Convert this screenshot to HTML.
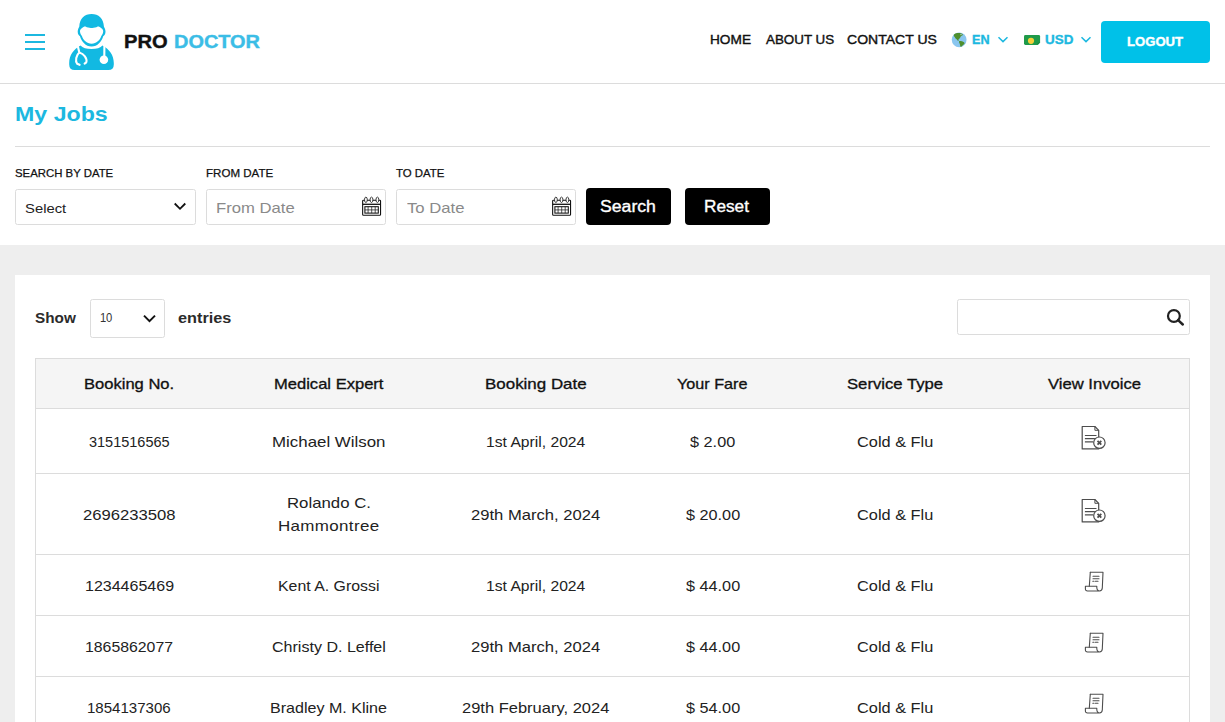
<!DOCTYPE html>
<html lang="en"><head><meta charset="utf-8"><title>Pro Doctor - My Jobs</title>
<style>
*{box-sizing:border-box;margin:0;padding:0}
html,body{width:1225px;height:722px;overflow:hidden;background:#fff;font-family:"Liberation Sans",sans-serif;}
body{position:relative}
.t{position:absolute;transform-origin:0 50%;white-space:pre;line-height:20px;font-family:"Liberation Sans",sans-serif;}
.abs{position:absolute}
.hdr{position:absolute;left:0;top:0;width:1225px;height:84px;background:#fff;border-bottom:1px solid #dcdcdc}
.bar{position:absolute;left:25px;width:20px;height:2px;background:#1cb8e0}
.hr{position:absolute;left:15px;top:146px;width:1195px;height:1px;background:#dcdcdc}
.inp{position:absolute;top:189px;height:36px;width:181px;border:1px solid #dcdcdc;border-radius:2.5px;background:#fff}
.btn{position:absolute;top:188px;height:37px;width:85px;background:#000;border-radius:4px}
.gray{position:absolute;left:0;top:245px;width:1225px;height:477px;background:#eeeeee}
.card{position:absolute;left:15px;top:275px;width:1195px;height:447px;background:#fff}
.logout{position:absolute;left:1101px;top:21px;width:109px;height:42px;background:#00c1e8;border-radius:4px}
.tbl{position:absolute;left:35px;top:358px;width:1155px;height:364px;border:1px solid #dcdcdc;border-bottom:none}
.thead{position:absolute;left:0;top:0;width:1153px;height:50px;background:#f5f5f5}
.line{position:absolute;left:0;width:1153px;height:1px;background:#dcdcdc}

</style></head>
<body>
<div class="hdr"></div>
<div class="bar" style="top:34px"></div><div class="bar" style="top:41px"></div><div class="bar" style="top:48px"></div>

<!-- doctor logo -->
<svg class="abs" style="left:69px;top:14px" width="45" height="57" viewBox="0 0 45 57">
  <path fill="#12b9e2" d="M5.700 56 Q0.2 56 0.2 50.500 V49 C0.2 41 4.5 35.400 11.5 31.4 C13.500 33.8 17.5 34.900 22.5 34.9 C27.5 34.900 31.500 33.8 33.5 31.400 C40.5 35.4 44.800 41 44.8 49 V50.500 Q44.8 56 39.300 56 Z"/>
  <path fill="#12b9e2" d="M22.6 0 C29.600 0 34.6 4.600 34.9 12.5 C35 13.500 36.5 14.5 36.500 17.6 C36.5 20 35.500 21.5 34.2 22.300 C32.8 27.5 28.500 32.56 22.6 32.560 C16.7 32.56 12.400 27.5 11 22.300 C9.7 21.5 8.700 20 8.7 17.600 C8.7 14.5 10.200 13.5 10.3 12.500 C10.6 4.6 15.600 0 22.6 0 Z"/>
  <path fill="#fff" d="M12.9 14.300 C14 13 15.300 12.5 16.5 12.600 C18.5 13.8 20.500 14.1 22.6 14 C24.700 14.1 26.7 13.800 28.7 12.6 C29.900 12.5 31.2 13 32.300 14.3 C33.6 15 34.300 16.2 34.2 17.600 C34.1 19.5 33.300 20.6 32.3 22 C31 26 27.500 29.7 22.6 29.700 C17.7 29.7 14.200 26 12.9 22 C11.900 20.6 11.1 19.500 11 17.6 C10.900 16.2 11.6 15 12.900 14.3 Z"/>
  <g fill="none" stroke="#fff" stroke-width="2.100" stroke-linecap="round" stroke-linejoin="round">
    <path d="M8.9 32.600 L10.3 38.500 C7.3 41 5.900 47 8.2 49.800 L10.6 50.800"/>
    <path d="M10.8 38.700 C14.5 39.500 18.500 44.5 17.3 48.300 L15.6 49.600"/>
    <path d="M35.4 32.300 L35.300 42"/>
  </g>
  <circle cx="34.900" cy="45.700" r="4.300" fill="#fff"/>
</svg>

<!-- globe emoji -->
<svg class="abs" style="left:951px;top:32px" width="16" height="16" viewBox="-0.7 -0.4 16 16">
  <circle cx="7.45" cy="7.45" r="7.4" fill="#8ac6ef"/>
  <path fill="#4f8f2e" d="M2.3 2.100 C4 0.700 6.800 0.300 9 0.900 C10.2 1.3 11.100 1.800 11.2 2.3 C10.600 3.400 9.4 3.5 8.8 4.400 C8.700 5.5 7.8 6.300 7 6.8 C6.600 7.700 6.7 8.300 7.1 8.6 C6.200 8.500 5.5 7.8 5.2 7 C4.300 6.500 3.4 5.600 3 4.600 C2.300 4.200 1.8 3.100 2.300 2.1 Z"/>
  <path fill="#4f8f2e" d="M7.6 8.700 C8.8 8.300 10.6 8.700 11.900 9.500 C12.9 10 13.100 10.8 12.5 11.600 C11.7 12.300 10.600 13.2 9.8 14.200 C9.300 14.600 8.7 14.4 8.600 13.800 C8.5 12.6 8 11.600 7.700 10.600 C7.2 10 7.100 9.2 7.6 8.700 Z"/>
  <circle cx="9.300" cy="2.2" r="0.600" fill="#d8ecf8"/>
</svg>
<!-- chevron EN -->
<svg class="abs" style="left:997px;top:36px" width="12" height="8" viewBox="-0.5 -0.5 12 8"><path d="M1 0.800 L5.500 5.100 L10 0.800" fill="none" stroke="#1cb8e0" stroke-width="1.500"/></svg>
<!-- money emoji -->
<svg class="abs" style="left:1023px;top:34px" width="18" height="12" viewBox="-0.8 -0.9 18 12">
  <path fill="#1f9a49" d="M1.6 0.200 H14.9 Q16.300 0.2 16.3 1.600 V7.500 L13.800 10 H1.6 Q0.200 10 0.2 8.600 V1.6 Q0.2 0.200 1.6 0.2 Z"/>
  <path fill="#178a3f" d="M16.3 7.500 L13.8 10 L13.800 8.300 Q13.8 7.500 14.600 7.5 Z"/>
  <circle cx="7.200" cy="5.9" r="3.100" fill="#f6cf3a"/>
</svg>
<!-- chevron USD -->
<svg class="abs" style="left:1080px;top:36px" width="12" height="8" viewBox="-0.5 -0.5 12 8"><path d="M1 0.800 L5.500 5.100 L10 0.800" fill="none" stroke="#1cb8e0" stroke-width="1.500"/></svg>
<div class="logout"></div>

<div class="hr"></div>

<!-- filter row -->
<div class="inp" style="left:15px"></div>
<svg class="abs" style="left:173px;top:202px" width="14" height="10" viewBox="-0.5 -0 14 10"><path d="M1.2 1.5 L6.5 6.8 L11.800 1.5" fill="none" stroke="#111" stroke-width="1.800"/></svg>
<div class="inp" style="left:206px;width:180px"></div>
<div class="inp" style="left:396px;width:180px"></div>
<svg class="abs cal" style="left:362px;top:196px" width="21" height="21" viewBox="-0 -0.5 21 21">
  <g fill="none" stroke="#111">
    <rect x="0.65" y="3.8" width="17.9" height="15" rx="0.8" stroke-width="1.100"/>
    <line x1="0.65" y1="7.8" x2="18.55" y2="7.800" stroke-width="1.3"/>
    <rect x="2.9" y="10.2" width="13.4" height="6.4" stroke-width="1.050"/>
    <path d="M6.1 10.2 V16.600 M9.7 10.200 V16.6 M13.200 10.2 V16.6 M2.9 13.400 H16.3" stroke-width="0.7"/>
  </g>
  <g fill="#fff" stroke="#111" stroke-width="0.800"><ellipse cx="3.9" cy="3.3" rx="1.4" ry="2.7"/><ellipse cx="9.5" cy="3.300" rx="1.4" ry="2.7"/><ellipse cx="15.4" cy="3.3" rx="1.400" ry="2.7"/></g>
</svg>
<svg class="abs cal" style="left:552px;top:196px" width="21" height="21" viewBox="-0 -0.5 21 21">
  <g fill="none" stroke="#111">
    <rect x="0.65" y="3.8" width="17.9" height="15" rx="0.8" stroke-width="1.100"/>
    <line x1="0.65" y1="7.8" x2="18.55" y2="7.800" stroke-width="1.3"/>
    <rect x="2.9" y="10.2" width="13.4" height="6.4" stroke-width="1.050"/>
    <path d="M6.1 10.2 V16.600 M9.7 10.200 V16.6 M13.200 10.2 V16.6 M2.9 13.400 H16.3" stroke-width="0.7"/>
  </g>
  <g fill="#fff" stroke="#111" stroke-width="0.800"><ellipse cx="3.9" cy="3.3" rx="1.4" ry="2.7"/><ellipse cx="9.5" cy="3.300" rx="1.4" ry="2.7"/><ellipse cx="15.4" cy="3.3" rx="1.400" ry="2.7"/></g>
</svg>
<div class="btn" style="left:586px"></div>
<div class="btn" style="left:685px"></div>

<!-- gray area + card -->
<div class="gray"></div>
<div class="card"></div>
<div class="abs" style="left:90px;top:299px;width:75px;height:39px;border:1px solid #dcdcdc;border-radius:2.5px;background:#fff"></div>
<svg class="abs" style="left:142px;top:313px" width="15" height="11" viewBox="-0.5 -0.6 15 11"><path d="M1.5 2 L7 7.5 L12.5 2" fill="none" stroke="#111" stroke-width="2"/></svg>
<div class="abs" style="left:957px;top:299px;width:233px;height:36px;border:1px solid #dcdcdc;border-radius:2.5px;background:#fff"></div>
<svg class="abs" style="left:1166px;top:308px" width="20" height="19" viewBox="-0 -0.5 20 19"><circle cx="7.900" cy="7.5" r="5.9" fill="none" stroke="#222" stroke-width="2.200"/><path d="M12.1 11.7 L16.800 16" stroke="#222" stroke-width="2.500" stroke-linecap="round"/></svg>

<!-- table -->
<div class="tbl">
  <div class="thead"></div>
  <div class="line" style="top:49px"></div>
  <div class="line" style="top:114px"></div>
  <div class="line" style="top:195px"></div>
  <div class="line" style="top:256px"></div>
  <div class="line" style="top:317px"></div>
</div>

<!-- invoice icons: doc with x -->
<svg class="abs" style="left:1081px;top:425px" width="27" height="26" viewBox="-0.5 -0.5 27 26">
  <g fill="none" stroke="#4d4d4d" stroke-width="1.200" stroke-linejoin="round">
    <path d="M0.7 1 H13.400 L17.200 4.800 V23.4 H0.7 Z"/>
    <path d="M13.400 1 V4.800 H17.2" stroke-width="1"/>
    <path d="M3.4 10 H15 M3.4 13.200 H13.4 M3.4 16.300 H12"/>
  </g>
  <circle cx="17.900" cy="17.2" r="5.700" fill="#fff" stroke="#4d4d4d" stroke-width="1.2"/>
  <path d="M16 15.300 L19.8 19.1 M19.800 15.3 L16 19.100" stroke="#4d4d4d" stroke-width="1.800"/>
</svg>
<svg class="abs" style="left:1081px;top:498px" width="27" height="26" viewBox="-0.5 -0.5 27 26">
  <g fill="none" stroke="#4d4d4d" stroke-width="1.200" stroke-linejoin="round">
    <path d="M0.7 1 H13.400 L17.200 4.800 V23.4 H0.7 Z"/>
    <path d="M13.400 1 V4.800 H17.2" stroke-width="1"/>
    <path d="M3.4 10 H15 M3.4 13.200 H13.4 M3.4 16.300 H12"/>
  </g>
  <circle cx="17.900" cy="17.2" r="5.700" fill="#fff" stroke="#4d4d4d" stroke-width="1.2"/>
  <path d="M16 15.300 L19.8 19.1 M19.800 15.3 L16 19.100" stroke="#4d4d4d" stroke-width="1.800"/>
</svg>
<!-- invoice icons: scroll -->
<svg class="abs sc" style="left:1084px;top:571px" width="22" height="22" viewBox="-0 -0.5 22 22">
  <g fill="none" stroke="#4d4d4d" stroke-width="1.1" stroke-linejoin="round" stroke-linecap="round">
    <path d="M6.300 0.8 H19 L18.300 16.600 C18.2 18.5 17 19.500 15.4 19.5 H3.500 C2.200 19.5 1.400 18.700 1.4 17.400 V14.700 H12.800 C12.600 17.300 13.300 19.5 15.400 19.5"/>
    <path d="M6.300 0.800 L5.300 14.700"/>
    <path d="M9 4.800 H15 M9 7.2 H15 M8.8 9.800 H10 M11.4 9.8 H14"/>
  </g>
</svg>
<svg class="abs sc" style="left:1084px;top:632px" width="22" height="22" viewBox="-0 -0.5 22 22">
  <g fill="none" stroke="#4d4d4d" stroke-width="1.1" stroke-linejoin="round" stroke-linecap="round">
    <path d="M6.300 0.8 H19 L18.300 16.600 C18.2 18.5 17 19.500 15.4 19.5 H3.500 C2.200 19.5 1.400 18.700 1.4 17.400 V14.700 H12.800 C12.600 17.300 13.300 19.5 15.400 19.5"/>
    <path d="M6.300 0.800 L5.300 14.700"/>
    <path d="M9 4.800 H15 M9 7.2 H15 M8.8 9.800 H10 M11.4 9.8 H14"/>
  </g>
</svg>
<svg class="abs sc" style="left:1084px;top:693px" width="22" height="22" viewBox="-0 -0.5 22 22">
  <g fill="none" stroke="#4d4d4d" stroke-width="1.1" stroke-linejoin="round" stroke-linecap="round">
    <path d="M6.300 0.8 H19 L18.300 16.600 C18.2 18.5 17 19.500 15.4 19.5 H3.500 C2.200 19.5 1.400 18.700 1.4 17.400 V14.700 H12.800 C12.600 17.300 13.300 19.5 15.400 19.5"/>
    <path d="M6.300 0.800 L5.300 14.700"/>
    <path d="M9 4.800 H15 M9 7.2 H15 M8.8 9.800 H10 M11.4 9.8 H14"/>
  </g>
</svg>

<!-- text layer -->
<span class="t" style="left:124.18px;top:31.59px;font-size:18.5px;color:#111;transform:scaleX(1.0881);font-weight:700;-webkit-text-stroke:0.4px #111;">PRO</span>
<span class="t" style="left:173.98px;top:31.59px;font-size:18.5px;color:#3bbde6;transform:scaleX(1.0769);font-weight:700;-webkit-text-stroke:0.4px #3bbde6;">DOCTOR</span>
<span class="t" style="left:710.39px;top:30.49px;font-size:13.6px;color:#111;transform:scaleX(1.0052);-webkit-text-stroke:0.4px #111;">HOME</span>
<span class="t" style="left:765.62px;top:30.49px;font-size:13.6px;color:#111;transform:scaleX(0.9853);-webkit-text-stroke:0.4px #111;">ABOUT US</span>
<span class="t" style="left:847.46px;top:30.49px;font-size:13.6px;color:#111;transform:scaleX(1.0317);-webkit-text-stroke:0.4px #111;">CONTACT US</span>
<span class="t" style="left:972.06px;top:30.09px;font-size:13.3px;color:#1cb8e0;transform:scaleX(0.9508);font-weight:700;-webkit-text-stroke:0.35px #1cb8e0;">EN</span>
<span class="t" style="left:1044.61px;top:30.09px;font-size:13.3px;color:#1cb8e0;transform:scaleX(1.0088);font-weight:700;-webkit-text-stroke:0.35px #1cb8e0;">USD</span>
<span class="t" style="left:1126.65px;top:32.19px;font-size:13.6px;color:#fff;transform:scaleX(0.9648);font-weight:700;-webkit-text-stroke:0.4px #fff;">LOGOUT</span>
<span class="t" style="left:14.72px;top:104.30px;font-size:20.5px;color:#1cb8e0;transform:scaleX(1.1300);letter-spacing:0.01px;font-weight:700;">My Jobs</span>
<span class="t" style="left:14.73px;top:162.78px;font-size:11.6px;color:#111;transform:scaleX(0.9811);-webkit-text-stroke:0.25px #111;">SEARCH BY DATE</span>
<span class="t" style="left:205.65px;top:162.78px;font-size:11.6px;color:#111;transform:scaleX(0.9971);-webkit-text-stroke:0.25px #111;">FROM DATE</span>
<span class="t" style="left:396.24px;top:162.78px;font-size:11.6px;color:#111;transform:scaleX(0.9855);-webkit-text-stroke:0.25px #111;">TO DATE</span>
<span class="t" style="left:24.92px;top:198.52px;font-size:13.5px;color:#222;transform:scaleX(1.0981);">Select</span>
<span class="t" style="left:215.58px;top:197.50px;font-size:15px;color:#8a8a8a;transform:scaleX(1.1115);">From Date</span>
<span class="t" style="left:406.78px;top:197.50px;font-size:15px;color:#8a8a8a;transform:scaleX(1.1123);">To Date</span>
<span class="t" style="left:600.39px;top:196.86px;font-size:16px;color:#fff;transform:scaleX(1.1027);-webkit-text-stroke:0.35px #fff;">Search</span>
<span class="t" style="left:704.41px;top:196.86px;font-size:16px;color:#fff;transform:scaleX(1.0761);-webkit-text-stroke:0.35px #fff;">Reset</span>
<span class="t" style="left:34.89px;top:308.00px;font-size:15px;color:#2b2b2b;transform:scaleX(1.0200);font-weight:700;">Show</span>
<span class="t" style="left:178.02px;top:308.00px;font-size:15px;color:#2b2b2b;transform:scaleX(1.0838);font-weight:700;">entries</span>
<span class="t" style="left:99.50px;top:308.10px;font-size:13px;color:#333;transform:scaleX(0.8600);letter-spacing:-0.26px;">10</span>
<span class="t" style="left:84.14px;top:373.90px;font-size:15px;color:#111;transform:scaleX(1.1032);-webkit-text-stroke:0.32px #111;">Booking No.</span>
<span class="t" style="left:273.60px;top:373.90px;font-size:15px;color:#111;transform:scaleX(1.1034);-webkit-text-stroke:0.32px #111;">Medical Expert</span>
<span class="t" style="left:484.58px;top:373.90px;font-size:15px;color:#111;transform:scaleX(1.1288);-webkit-text-stroke:0.32px #111;">Booking Date</span>
<span class="t" style="left:677.29px;top:373.90px;font-size:15px;color:#111;transform:scaleX(1.0789);-webkit-text-stroke:0.32px #111;">Your Fare</span>
<span class="t" style="left:846.50px;top:373.90px;font-size:15px;color:#111;transform:scaleX(1.1110);-webkit-text-stroke:0.32px #111;">Service Type</span>
<span class="t" style="left:1047.52px;top:373.90px;font-size:15px;color:#111;transform:scaleX(1.1081);-webkit-text-stroke:0.32px #111;">View Invoice</span>
<span class="t" style="left:88.96px;top:431.50px;font-size:15px;color:#222;transform:scaleX(0.9663);">3151516565</span>
<span class="t" style="left:272.06px;top:431.50px;font-size:15px;color:#222;transform:scaleX(1.1253);">Michael Wilson</span>
<span class="t" style="left:485.56px;top:431.50px;font-size:15px;color:#222;transform:scaleX(1.0443);">1st April, 2024</span>
<span class="t" style="left:690.02px;top:431.50px;font-size:15px;color:#222;transform:scaleX(1.0844);">$ 2.00</span>
<span class="t" style="left:856.52px;top:431.50px;font-size:15px;color:#222;transform:scaleX(1.0888);">Cold &amp; Flu</span>
<span class="t" style="left:83.01px;top:504.50px;font-size:15px;color:#222;transform:scaleX(1.1099);">2696233508</span>
<span class="t" style="left:470.91px;top:504.50px;font-size:15px;color:#222;transform:scaleX(1.1062);">29th March, 2024</span>
<span class="t" style="left:685.52px;top:504.50px;font-size:15px;color:#222;transform:scaleX(1.0822);">$ 20.00</span>
<span class="t" style="left:856.52px;top:504.50px;font-size:15px;color:#222;transform:scaleX(1.0888);">Cold &amp; Flu</span>
<span class="t" style="left:84.51px;top:575.50px;font-size:15px;color:#222;transform:scaleX(1.0675);">1234465469</span>
<span class="t" style="left:278.14px;top:575.50px;font-size:15px;color:#222;transform:scaleX(1.0578);">Kent A. Grossi</span>
<span class="t" style="left:485.56px;top:575.50px;font-size:15px;color:#222;transform:scaleX(1.0443);">1st April, 2024</span>
<span class="t" style="left:685.52px;top:575.50px;font-size:15px;color:#222;transform:scaleX(1.0822);">$ 44.00</span>
<span class="t" style="left:856.52px;top:575.50px;font-size:15px;color:#222;transform:scaleX(1.0888);">Cold &amp; Flu</span>
<span class="t" style="left:85.01px;top:636.50px;font-size:15px;color:#222;transform:scaleX(1.0548);">1865862077</span>
<span class="t" style="left:272.19px;top:636.50px;font-size:15px;color:#222;transform:scaleX(1.0698);">Christy D. Leffel</span>
<span class="t" style="left:470.91px;top:636.50px;font-size:15px;color:#222;transform:scaleX(1.1062);">29th March, 2024</span>
<span class="t" style="left:685.52px;top:636.50px;font-size:15px;color:#222;transform:scaleX(1.0822);">$ 44.00</span>
<span class="t" style="left:856.52px;top:636.50px;font-size:15px;color:#222;transform:scaleX(1.0888);">Cold &amp; Flu</span>
<span class="t" style="left:87.08px;top:697.50px;font-size:15px;color:#222;transform:scaleX(1.0034);">1854137306</span>
<span class="t" style="left:270.12px;top:697.50px;font-size:15px;color:#222;transform:scaleX(1.0712);">Bradley M. Kline</span>
<span class="t" style="left:461.91px;top:697.50px;font-size:15px;color:#222;transform:scaleX(1.0997);">29th February, 2024</span>
<span class="t" style="left:685.52px;top:697.50px;font-size:15px;color:#222;transform:scaleX(1.0822);">$ 54.00</span>
<span class="t" style="left:856.52px;top:697.50px;font-size:15px;color:#222;transform:scaleX(1.0888);">Cold &amp; Flu</span>
<span class="t" style="left:287.08px;top:493.10px;font-size:15px;color:#222;transform:scaleX(1.1180);">Rolando C.</span>
<span class="t" style="left:278.06px;top:516.00px;font-size:15px;color:#222;transform:scaleX(1.1300);letter-spacing:0.31px;">Hammontree</span>
</body></html>
